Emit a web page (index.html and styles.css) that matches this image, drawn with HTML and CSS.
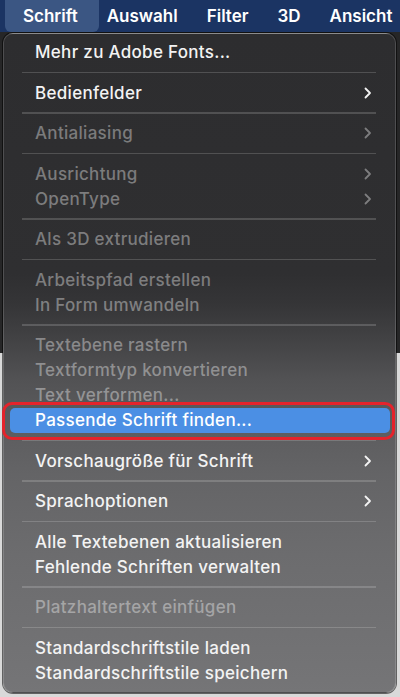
FILE: index.html
```html
<!DOCTYPE html>
<html lang="de">
<head>
<meta charset="utf-8">
<title>Schrift-Menü</title>
<link rel="stylesheet" href="styles.css">
</head>
<body>
<div class="menubar">
  <span class="mb-item active">Schrift</span>
  <span class="mb-item">Auswahl</span>
  <span class="mb-item">Filter</span>
  <span class="mb-item">3D</span>
  <span class="mb-item">Ansicht</span>
</div>
<div class="menu">
  <div class="item">Mehr zu Adobe Fonts...</div>
  <div class="sep"></div>
  <div class="item sub">Bedienfelder<svg class="chev" viewBox="0 0 8 12"><polyline points="1.5,1.5 6,6 1.5,10.5"/></svg></div>
  <div class="sep"></div>
  <div class="item sub dis">Antialiasing<svg class="chev" viewBox="0 0 8 12"><polyline points="1.5,1.5 6,6 1.5,10.5"/></svg></div>
  <div class="sep"></div>
  <div class="item sub dis">Ausrichtung<svg class="chev" viewBox="0 0 8 12"><polyline points="1.5,1.5 6,6 1.5,10.5"/></svg></div>
  <div class="item sub dis">OpenType<svg class="chev" viewBox="0 0 8 12"><polyline points="1.5,1.5 6,6 1.5,10.5"/></svg></div>
  <div class="sep"></div>
  <div class="item dis">Als 3D extrudieren</div>
  <div class="sep"></div>
  <div class="item dis">Arbeitspfad erstellen</div>
  <div class="item dis">In Form umwandeln</div>
  <div class="sep"></div>
  <div class="item dis">Textebene rastern</div>
  <div class="item dis">Textformtyp konvertieren</div>
  <div class="item dis">Text verformen...</div>
  <div class="item selected">Passende Schrift finden...<span class="outline"></span></div>
  <div class="sep"></div>
  <div class="item sub">Vorschaugröße für Schrift<svg class="chev" viewBox="0 0 8 12"><polyline points="1.5,1.5 6,6 1.5,10.5"/></svg></div>
  <div class="sep"></div>
  <div class="item sub">Sprachoptionen<svg class="chev" viewBox="0 0 8 12"><polyline points="1.5,1.5 6,6 1.5,10.5"/></svg></div>
  <div class="sep"></div>
  <div class="item">Alle Textebenen aktualisieren</div>
  <div class="item">Fehlende Schriften verwalten</div>
  <div class="sep"></div>
  <div class="item dis">Platzhaltertext einfügen</div>
  <div class="sep"></div>
  <div class="item">Standardschriftstile laden</div>
  <div class="item">Standardschriftstile speichern</div>
</div>
</body>
</html>
```
FILE: styles.css
```css
html, body {
  margin: 0;
  padding: 0;
}
body {
  width: 400px;
  height: 697px;
  overflow: hidden;
  font-family: Inter, "Noto Sans", "Liberation Sans", sans-serif;
  background: linear-gradient(to bottom, #262627 0, #262627 353px, #d9d9d9 353px, #d9d9d9 100%);
}
.menubar {
  height: 32px;
  background: #1b3463;
  display: flex;
  align-items: stretch;
  gap: 29px;
  padding-left: 23px;
  color: #ffffff;
  font-size: 17px;
  font-weight: 600;
}
.mb-item {
  display: flex;
  align-items: center;
  padding-bottom: 1px;
}
.mb-item.active {
  background: #3b5683;
  border-radius: 0 0 6px 6px;
  padding: 0 21px 1px 18px;
  margin: 0 -21px 0 -18px;
}
.menu {
  margin: 1px 4px 0 3px;
  height: 660px;
  box-sizing: border-box;
  border-radius: 10px;
  border: 1px solid rgba(255, 255, 255, 0.16);
  box-shadow: 0 0 0 1px rgba(0, 0, 0, 0.55);
  padding: 5.5px 0 6px;
  background: linear-gradient(to bottom,
    #2d2d2f 0px,
    #2f2f31 240px,
    #353537 270px,
    #444446 310px,
    #525254 345px,
    #5b5b5d 385px,
    #646466 440px,
    #6c6c6e 520px,
    #717173 600px,
    #757577 660px);
  color: #f3f3f3;
  font-size: 17px;
  font-weight: 500;
  letter-spacing: 0.3px;
}
.item {
  position: relative;
  height: 25px;
  display: flex;
  align-items: center;
  padding: 0 23px 0 31px;
  white-space: nowrap;
}
.item.sub {
  justify-content: space-between;
}
.item.dis {
  color: rgba(255, 255, 255, 0.38);
}
.chev {
  width: 8px;
  height: 12px;
  fill: none;
  stroke: currentColor;
  stroke-width: 1.8;
  stroke-linecap: round;
  stroke-linejoin: round;
}
.item.selected {
  background: #4b8fe4;
  border-radius: 5px;
  margin: 0 5px 0 6px;
  padding-left: 25px;
  color: #ffffff;
}
.outline {
  position: absolute;
  top: -6px;
  bottom: -7px;
  left: -8px;
  right: -5px;
  border: 3px solid #e5232b;
  border-radius: 10px;
  pointer-events: none;
}
.sep {
  height: 15.55px;
  display: flex;
  align-items: center;
  padding: 0 19px 0 18px;
}
.sep::before {
  content: "";
  display: block;
  flex: 1;
  height: 1.5px;
  background: rgba(255, 255, 255, 0.17);
}
```
